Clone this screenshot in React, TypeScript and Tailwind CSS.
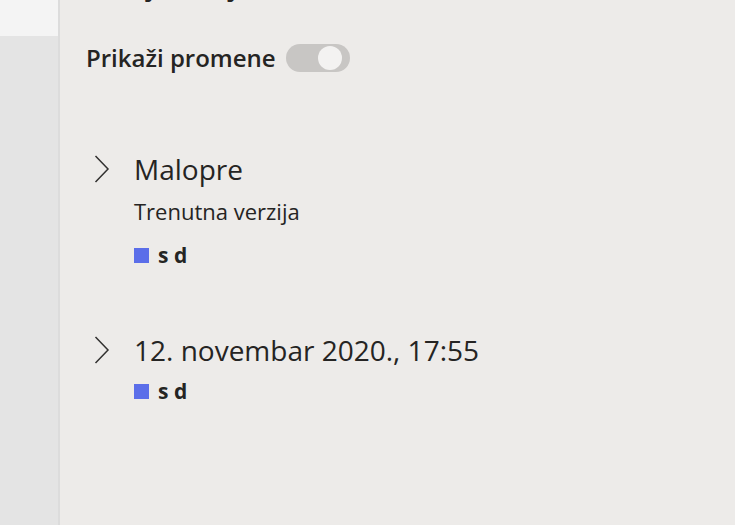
const VERSIONS = [
  { key: "now", title: "Malopre", note: "Trenutna verzija", author: "s d" },
  { key: "v1", title: "12. novembar 2020., 17:55", author: "s d" },
];

export default function App() {
  return (
    <div
      className="flex h-[525px] w-[735px] overflow-hidden bg-[#edebe9] text-[#252423]"
      style={{ fontFamily: '"Open Sans", "Noto Sans", sans-serif' }}
    >
      <div className="flex w-[60px] shrink-0 flex-col border-r-2 border-[#dcdcdc]">
        <div className="h-9 bg-[#f4f4f4]" />
        <div className="flex-1 bg-[#e4e4e4]" />
      </div>

      <div className="flex-1 pl-[26px]">
        <h1 className="-mt-[27px] h-[27px] text-[23px] font-bold leading-[28px]">Istorija verzija</h1>

        <div className="mt-[44px] flex items-center gap-[10px]">
          <span className="text-[24px] font-semibold leading-[28px]">Prikaži promene</span>
          <Toggle />
        </div>

        <div className="mt-[79px] flex flex-col gap-[63px]">
          {VERSIONS.map((v) => (
            <div key={v.key} className="flex">
              <div className="ml-[8px] flex h-[36px] w-[40px] shrink-0 items-center">
                <Chevron />
              </div>
              <div className="flex flex-col">
                <span className="text-[28px] leading-[36px]">{v.title}</span>
                {v.note && <span className="mt-[10px] text-[22px] leading-[28px]">{v.note}</span>}
                <div className={`flex items-center gap-[9px] ${v.note ? "mt-[16px]" : "mt-[9px]"}`}>
                  <span className="h-[15px] w-[15px] bg-[#5b6ee9]" />
                  <span className="text-[21px] font-bold leading-[28px]">{v.author}</span>
                </div>
              </div>
            </div>
          ))}
        </div>
      </div>
    </div>
  );
}

function Chevron() {
  return (
    <svg width="16" height="28" viewBox="0 0 16 28" fill="none" stroke="#323130" strokeWidth="1.5">
      <polyline points="1.5,1 14,14 1.5,27" />
    </svg>
  );
}

function Toggle() {
  return (
    <span className="flex h-[28px] w-[64px] items-center justify-end rounded-full bg-[#c8c6c4] pr-[8px]">
      <span className="h-[24px] w-[24px] rounded-full bg-[#f3f2f1]" />
    </span>
  );
}
